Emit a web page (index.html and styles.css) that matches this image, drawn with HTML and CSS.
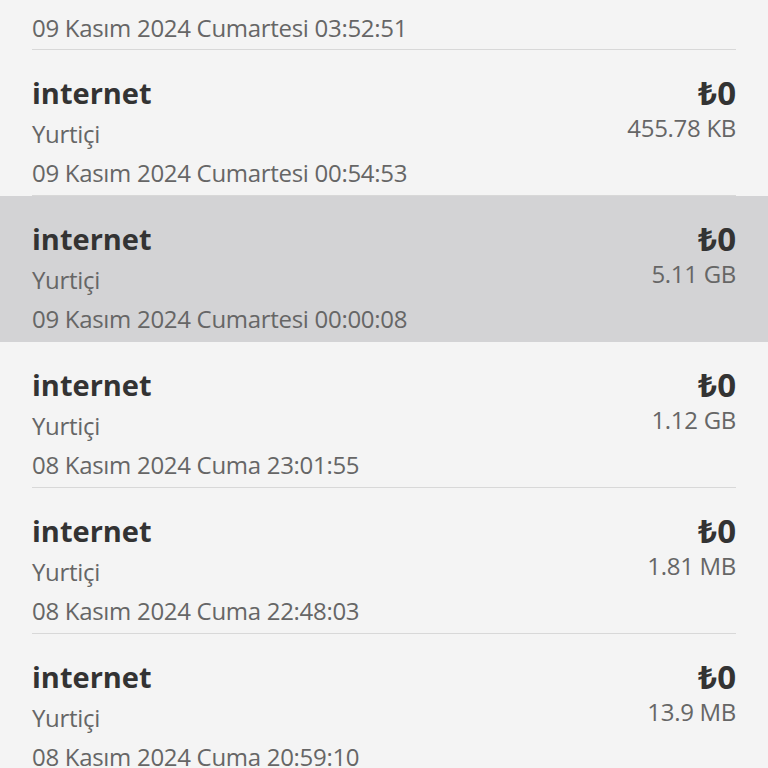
FILE: index.html
```html
<!DOCTYPE html>
<html lang="tr">
<head>
<meta charset="utf-8">
<link rel="stylesheet" href="styles.css">
</head>
<body>
<div class="list">
  <div class="row partial">
    <div class="inner">
      <div class="left"><div class="date">09 Kasım 2024 Cumartesi 03:52:51</div></div>
    </div>
  </div>
  <div class="row">
    <div class="inner">
      <div class="left">
        <div class="title">internet</div>
        <div class="sub">Yurtiçi</div>
        <div class="date">09 Kasım 2024 Cumartesi 00:54:53</div>
      </div>
      <div class="right">
        <div class="amount">₺0</div>
        <div class="size">455.78 KB</div>
      </div>
    </div>
  </div>
  <div class="row selected">
    <div class="inner">
      <div class="left">
        <div class="title">internet</div>
        <div class="sub">Yurtiçi</div>
        <div class="date">09 Kasım 2024 Cumartesi 00:00:08</div>
      </div>
      <div class="right">
        <div class="amount">₺0</div>
        <div class="size">5.11 GB</div>
      </div>
    </div>
  </div>
  <div class="row">
    <div class="inner">
      <div class="left">
        <div class="title">internet</div>
        <div class="sub">Yurtiçi</div>
        <div class="date">08 Kasım 2024 Cuma 23:01:55</div>
      </div>
      <div class="right">
        <div class="amount">₺0</div>
        <div class="size">1.12 GB</div>
      </div>
    </div>
  </div>
  <div class="row">
    <div class="inner">
      <div class="left">
        <div class="title">internet</div>
        <div class="sub">Yurtiçi</div>
        <div class="date">08 Kasım 2024 Cuma 22:48:03</div>
      </div>
      <div class="right">
        <div class="amount">₺0</div>
        <div class="size">1.81 MB</div>
      </div>
    </div>
  </div>
  <div class="row">
    <div class="inner">
      <div class="left">
        <div class="title">internet</div>
        <div class="sub">Yurtiçi</div>
        <div class="date">08 Kasım 2024 Cuma 20:59:10</div>
      </div>
      <div class="right">
        <div class="amount">₺0</div>
        <div class="size">13.9 MB</div>
      </div>
    </div>
  </div>
</div>
</body>
</html>
```
FILE: styles.css
```css
html, body {
  margin: 0;
  padding: 0;
  background: #f4f4f4;
  height: 768px;
  overflow: hidden;
}
body {
  font-family: "Open Sans", "Noto Sans", "DejaVu Sans", sans-serif;
  color: #333;
}
.list {
  display: flex;
  flex-direction: column;
  margin-top: -96px;
}
.row {
  height: 146px;
  box-sizing: border-box;
}
.row.selected {
  background: #d3d3d5;
}
.row.selected .inner {
  border-bottom-color: transparent;
}
.inner {
  margin: 0 32px;
  height: 146px;
  box-sizing: border-box;
  border-bottom: 1px solid #d8d8d8;
  display: flex;
  justify-content: space-between;
  padding-top: 21px;
}
.left, .right {
  display: flex;
  flex-direction: column;
}
.right {
  align-items: flex-end;
}
.title {
  font-size: 29px;
  font-weight: 700;
  color: #333;
  line-height: 44px;
}
.amount {
  font-size: 33px;
  font-weight: 700;
  color: #333;
  line-height: 44px;
}
.sub, .date, .size {
  font-size: 24px;
  color: #666;
  line-height: 40px;
  letter-spacing: -0.3px;
}
.sub {
  line-height: 38px;
}
.size {
  line-height: 26px;
}
.partial .inner {
  padding-top: 104px;
}
```
